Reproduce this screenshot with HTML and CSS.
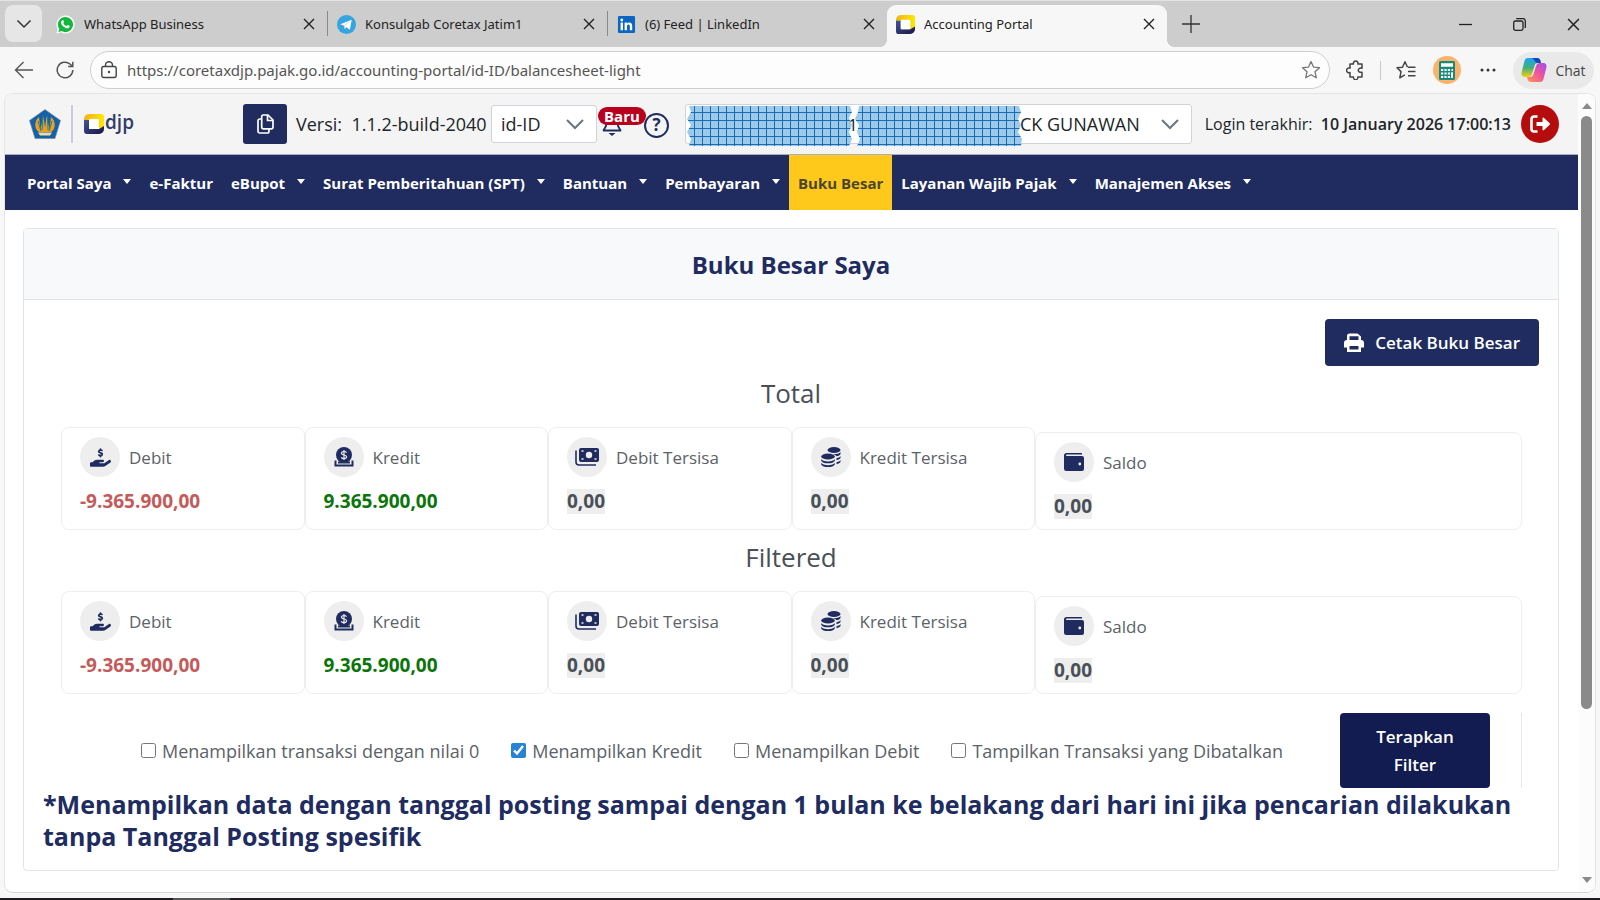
FILE: index.html
```html
<!DOCTYPE html>
<html lang="id">
<head>
<meta charset="utf-8">
<meta name="viewport" content="width=device-width, initial-scale=1">
<title>Accounting Portal</title>
<link rel="stylesheet" href="styles.css">
</head>
<body>
<svg class="defs" width="0" height="0" aria-hidden="true">
  <defs>
    <linearGradient id="gold" x1="0" y1="0" x2="1" y2="0"><stop offset="0" stop-color="#f2b21b"/><stop offset="1" stop-color="#ffe800"/></linearGradient>
    <linearGradient id="ink" x1="0" y1="0" x2="1" y2="1"><stop offset="0" stop-color="#3f5598"/><stop offset="1" stop-color="#1a1444"/></linearGradient>
    <linearGradient id="cop1" x1="0" y1="0" x2="0" y2="1"><stop offset="0" stop-color="#1ba5f5"/><stop offset=".5" stop-color="#3fae7c"/><stop offset="1" stop-color="#f2cf13"/></linearGradient>
    <linearGradient id="cop2" x1="1" y1="0" x2="0" y2="1"><stop offset="0" stop-color="#a04df0"/><stop offset=".5" stop-color="#f0559a"/><stop offset="1" stop-color="#ff9a4a"/></linearGradient>
    <pattern id="mesh" width="8" height="8" patternUnits="userSpaceOnUse"><rect width="8" height="8" fill="#9ccbe9"/><path d="M7.500 0V8M0 6.500H8" stroke="#1b6ab8" stroke-width="1"/></pattern>
    <symbol id="x" viewBox="0 0 12 12"><path d="M1 1l10 10M11 1L1 11" fill="none" stroke="currentColor" stroke-width="1.4"/></symbol>
    <symbol id="chev" viewBox="0 0 20 12"><path d="M2 2l8 8 8-8" fill="none" stroke="currentColor" stroke-width="2"/></symbol>
    <symbol id="djp" viewBox="0 0 20 20"><path d="M5 0h12a3 3 0 0 1 3 3v10l-5 2V6H6L0 9V5a5 5 0 0 1 5-5z" fill="url(#gold)"/><path d="M0 6h5v9h10l5-3v3a5 5 0 0 1-5 5H3a3 3 0 0 1-3-3z" fill="url(#ink)"/><rect x="5" y="5" width="10" height="10" rx="1" fill="#fff"/></symbol>
    <symbol id="hand" viewBox="0 0 576 512"><path d="M312 24V34.500c6.400 1.200 12.600 2.700 18.200 4.200 12.800 3.400 20.400 16.600 17 29.400s-16.600 20.400-29.400 17c-10.900-2.900-21.100-4.900-30.200-5-7.300-.1-14.700 1.700-19.400 4.400-2.100 1.300-3.100 2.400-3.500 3-.3 .5-.7 1.200-.7 2.800 0 .3 0 .5 0 .6 .2 .2 .9 1.200 3.300 2.600 5.800 3.500 14.400 6.200 27.400 10.100l.9 .3c11.100 3.300 25.900 7.800 37.900 15.300 13.700 8.600 26.100 22.900 26.400 44.900 .3 22.500-11.400 38.900-26.700 48.500-6.700 4.100-13.900 7-21.300 8.800V232c0 13.300-10.700 24-24 24s-24-10.700-24-24V220.600c-9.500-2.300-18.200-5.300-25.600-7.800-2.100-.7-4.100-1.400-6-2-12.600-4.200-19.400-17.800-15.200-30.400s17.800-19.400 30.400-15.200c2.600 .9 5 1.700 7.300 2.500 13.600 4.600 23.400 7.900 33.900 8.300 8 .3 15.100-1.600 19.200-4.100 1.900-1.200 2.800-2.200 3.200-2.900 .4-.6 .9-1.800 .8-4.100l0-.2c0-1 0-2.100-4-4.600-5.700-3.600-14.300-6.400-27.100-10.300l-1.900-.6c-10.800-3.200-25-7.500-36.400-14.400-13.500-8.100-26.500-22-26.600-44.100-.1-22.900 12.900-38.600 27.700-47.400 6.400-3.800 13.300-6.400 20.200-8.200V24c0-13.300 10.700-24 24-24s24 10.700 24 24zM568 336c13 18 10 43-8 56L433 485c-23 17-51 27-81 27H32c-18 0-32-14-32-32V416c0-18 14-32 32-32H69l45-36c23-18 51-28 80-28H352c18 0 32 14 32 32s-14 32-32 32H272c-9 0-16 7-16 16s7 16 16 16H392L512 328c18-13 43-10 56 8z"/></symbol>
    <symbol id="coin" viewBox="0 0 20 20"><circle cx="10" cy="8" r="8"/><path d="M1.500 13.500v5h17v-5M1 18.500h18" fill="none" stroke="currentColor" stroke-width="2"/><path d="M4 15.500h12" stroke="currentColor" stroke-width="2"/><path d="M12.600 5.600C12 4.800 11.200 4.500 10 4.500c-1.600 0-2.500.7-2.500 1.700 0 2.400 5.100 1.200 5.100 3.600 0 1.100-1 1.800-2.600 1.800-1.300 0-2.200-.4-2.800-1.300M10 3v10" fill="none" stroke="#eee" stroke-width="1.200"/></symbol>
    <symbol id="bill" viewBox="0 0 24 18"><rect x="4" y="0" width="20" height="14" rx="2"/><circle cx="14" cy="7" r="3.200" fill="#eee"/><path d="M6.500 3h2M6.500 11h2M19.500 3h2M19.500 11h2" stroke="#eee" stroke-width="1.600"/><path d="M1 2.500V14a3 3 0 0 0 3 3h17" fill="none" stroke="currentColor" stroke-width="1.600"/></symbol>
    <symbol id="coins" viewBox="0 0 20 20"><ellipse cx="13" cy="3" rx="6.500" ry="3"/><ellipse cx="7" cy="9.500" rx="6.800" ry="3"/><path d="M.2 12c1 3.200 12.600 3.200 13.600 0v1.700c-1 3.400-12.600 3.400-13.600 0zM.2 15.800c1 3.200 12.600 3.200 13.600 0v1.600c-1 3.400-12.600 3.400-13.600 0zM19.500 5v2c-.5 1.200-2 1.900-4 2.200-.7-1-2-1.700-3.500-2.200 4 .2 7-.6 7.500-2zM19.500 9v2c-.5 1-2 1.800-4 2.200v-2c2-.4 3.500-1 4-2.200zM19.500 13v2c-.5 1-2 1.800-4 2.200v-2c2-.4 3.500-1 4-2.200z"/></symbol>
    <symbol id="wallet" viewBox="0 0 20 18"><path d="M2.500 0H18v1.500H2.800a.8.8 0 0 0 0 1.600H18a2 2 0 0 1 2 2V16a2 2 0 0 1-2 2H2.500A2.500 2.500 0 0 1 0 15.500v-13A2.500 2.500 0 0 1 2.500 0zm13.300 9.600a1.400 1.400 0 1 0 0 2.800 1.400 1.400 0 0 0 0-2.800z"/></symbol>
  </defs>
</svg>

<div class="tabstrip">
  <button class="tab-menu" aria-label="Tab"><svg width="16" height="10" viewBox="0 0 16 10"><path d="M1.500 1.500L8 8l6.500-6.500" fill="none" stroke="#333" stroke-width="1.500"/></svg></button>
  <div class="tab">
    <svg width="19" height="19" viewBox="0 0 20 20"><path d="M10 .5a9.500 9.500 0 1 1-4.800 17.700L.5 19.500l1.300-4.700A9.500 9.500 0 0 1 10 .5z" fill="#fff"/><path d="M10 2a8 8 0 1 1-4.100 14.900L2.500 18l1-3.400A8 8 0 0 1 10 2z" fill="#12b83b"/><path d="M6.700 5.500c.7-.5 1.200 0 1.700 1.600.2.700-.8 1-.6 1.500.7 1.400 1.600 2.300 3.200 3 .6.100.9-1.200 1.500-1 1.300.6 2 .8 1.900 1.400-.5 2-2.500 2.200-4 1.600-2.500-.9-4.600-3-5.100-5.200-.2-1.200.4-2.300 1.400-2.900z" fill="#fff"/></svg>
    <span class="tab-title">WhatsApp Business</span>
    <button class="tab-close" aria-label="Tutup"><svg width="12" height="12"><use href="#x"/></svg></button>
  </div>
  <div class="tab">
    <svg width="19" height="19" viewBox="0 0 20 20"><circle cx="10" cy="10" r="10" fill="#34a5e0"/><path d="M3.500 9.800L15.500 5l-2 10.500-3.600-2.700-1.900 1.900-.4-3.500z" fill="#fff"/><path d="M7.800 11.200l5-4" stroke="#b8ddf2" stroke-width="1"/></svg>
    <span class="tab-title">Konsulgab Coretax Jatim1</span>
    <button class="tab-close" aria-label="Tutup"><svg width="12" height="12"><use href="#x"/></svg></button>
  </div>
  <div class="tab">
    <svg width="19" height="19" viewBox="0 0 20 20"><rect x="1" y="1" width="18" height="18" rx="1.500" fill="#0a66c2"/><path d="M3.800 8h2.500v8H3.800zM8 8h2.400v1.200c1.300-2.200 5.600-2 5.600 2V16h-2.500v-4.300c0-2.400-3-2.200-3 0V16H8z" fill="#fff"/><circle cx="5" cy="5.300" r="1.500" fill="#fff"/></svg>
    <span class="tab-title">(6) Feed | LinkedIn</span>
    <button class="tab-close" aria-label="Tutup"><svg width="12" height="12"><use href="#x"/></svg></button>
  </div>
  <div class="tab active">
    <svg width="19" height="19"><use href="#djp"/></svg>
    <span class="tab-title">Accounting Portal</span>
    <button class="tab-close" aria-label="Tutup"><svg width="12" height="12"><use href="#x"/></svg></button>
  </div>
  <button class="new-tab" aria-label="Tab baru"><svg width="18" height="18" viewBox="0 0 18 18"><path d="M9 0v18M0 9h18" stroke="#333" stroke-width="1.300"/></svg></button>
  <div class="window-buttons">
    <button aria-label="Kecilkan"><svg width="13" height="13" viewBox="0 0 13 13"><path d="M0 6.500h13" stroke="#222" stroke-width="1.300"/></svg></button>
    <button aria-label="Pulihkan"><svg width="13" height="13" viewBox="0 0 13 13"><rect x=".7" y="3" width="9.300" height="9.300" rx="1.800" fill="none" stroke="#222" stroke-width="1.300"/><path d="M3.200 .7H10A2.300 2.300 0 0 1 12.300 3v7" fill="none" stroke="#222" stroke-width="1.300"/></svg></button>
    <button aria-label="Tutup jendela"><svg width="13" height="13"><use href="#x"/></svg></button>
  </div>
</div>

<div class="toolbar">
  <button class="tool" aria-label="Kembali"><svg width="20" height="18" viewBox="0 0 20 18"><path d="M19 9H1.500M9.500 1l-8 8 8 8" fill="none" stroke="#555" stroke-width="1.400"/></svg></button>
  <button class="tool" aria-label="Muat ulang"><svg width="18" height="18" viewBox="0 0 18 18"><path d="M16.800 9A7.800 7.800 0 1 1 14 3l2.500 2.200M16.800 .8v4.700h-4.700" fill="none" stroke="#555" stroke-width="1.500"/></svg></button>
  <label class="address">
    <svg width="16" height="18" viewBox="0 0 16 18"><rect x=".8" y="5.500" width="14.400" height="11" rx="2" fill="none" stroke="#444" stroke-width="1.400"/><path d="M4.500 5.500V4.200a3.500 3.500 0 0 1 7 0v1.300" fill="none" stroke="#444" stroke-width="1.400"/><circle cx="8" cy="11" r="1.200" fill="#444"/></svg>
    <input type="text" aria-label="Alamat" value="https://coretaxdjp.pajak.go.id/accounting-portal/id-ID/balancesheet-light">
    <svg width="20" height="20" viewBox="0 0 20 20"><path d="M10 1.500l2.500 5.600 6 .6-4.500 4.100 1.300 6-5.300-3.100-5.300 3.100 1.300-6L1.500 7.700l6-.6z" fill="none" stroke="#777" stroke-width="1.300" stroke-linejoin="round"/></svg>
  </label>
  <button class="tool" aria-label="Ekstensi"><svg width="18" height="20" viewBox="0 0 18 20"><path d="M4 4h3.500a2.300 2.300 0 1 1 4.400 0H16v4.200c-5-1-5 5 0 4V17h-4.200a2.200 2.200 0 1 1-4.300 0H4v-4.500a2.400 2.400 0 1 1 0-4.300z" fill="none" stroke="#444" stroke-width="1.500" stroke-linejoin="round"/></svg></button>
  <span class="tool-divider"></span>
  <button class="tool" aria-label="Favorit"><svg width="20" height="20" viewBox="0 0 20 20"><path d="M11.500 7.200L9 1.800 6.500 7.200l-5.500.6 4 3.800-1.200 6.200 5-3" fill="none" stroke="#444" stroke-width="1.500" stroke-linejoin="round"/><path d="M12 7.200h7.500M12 11.500h7.500M12 15.800h7.500" stroke="#444" stroke-width="1.500"/></svg></button>
  <button class="tool" aria-label="Kalkulator"><svg width="28" height="28" viewBox="0 0 28 28"><circle cx="14" cy="14" r="14" fill="#fbb36b"/><rect x="6" y="5" width="16" height="19" rx="1.500" fill="#178a7c"/><path d="M8 9h12" stroke="#fff" stroke-width="3.500"/><path d="M8 14h9M8 17.500h9M8 21h9M18.500 14H20M18.500 17.500H20" stroke="#fff" stroke-width="2.200" stroke-dasharray="2.200 1.200"/><path d="M19 16.500V22" stroke="#fff" stroke-width="2"/></svg></button>
  <button class="tool" aria-label="Lainnya"><svg width="16" height="4" viewBox="0 0 16 4"><g fill="#333"><circle cx="2" cy="2" r="1.500"/><circle cx="8" cy="2" r="1.500"/><circle cx="14" cy="2" r="1.500"/></g></svg></button>
  <button class="chat"><svg width="26" height="24" viewBox="0 0 26 24"><path d="M7 0h9c2 0 3 1 3.500 3l.5 2h-3c-2 0-3 1-3.500 3L11 16c-.6 2-2 3-4 3H4c-3 0-4-2-3.300-5L3.500 3C4 1 5 0 7 0z" fill="url(#cop1)"/><path d="M11 0h5c2 0 3 1 3.500 3l.5 2h-3c-2 0-3-1-3.600-3z" fill="#1744b8"/><path d="M19 24h-9c-2 0-3-1-3.500-3L6 19h3c2 0 3-1 3.500-3L15 8c.6-2 2-3 4-3h3c3 0 4 2 3.300 5l-2.800 11c-.5 2-1.500 3-3.500 3z" fill="url(#cop2)"/></svg>Chat</button>
</div>

<div class="viewport">
  <div class="page">
    <header class="site-header">
      <a class="brand" href="#" aria-label="djp">
        <svg width="32" height="30" viewBox="0 0 32 30"><path d="M16 .5L31.500 11.500 26 29.500H6L.5 11.500z" fill="#1561a8" stroke="#7b8794" stroke-width=".6"/><path d="M10 8C5 12 5 20 10 23h12c5-3 5-11 0-15l-1.500 12-3-13-1.500 12-1.500-12-3 13z" fill="#e8a01e"/><path d="M14 7l-1 14M18.500 7l.5 14M9 12l3 10M23 12l-3 10" stroke="#1c7f9a" stroke-width="1"/><path d="M9 23.500h14l-2 3H11z" fill="#f4d9a0"/></svg>
        <span class="brand-line"></span>
        <svg width="20" height="20"><use href="#djp"/></svg><span class="brand-name">djp</span>
      </a>
      <button class="copy" aria-label="Salin versi"><svg width="17" height="20" viewBox="0 0 17 20"><path d="M5.500 1H11l5 5v7a1.800 1.800 0 0 1-1.800 1.800H6.500A1.800 1.800 0 0 1 4.700 13V2.500A1.500 1.500 0 0 1 6 1z" fill="none" stroke="#fff" stroke-width="1.700"/><path d="M10.500 1v5.500H16M4.500 5H2.700A1.700 1.700 0 0 0 1 6.700v10.600A1.700 1.700 0 0 0 2.700 19h7.600a1.700 1.700 0 0 0 1.700-1.700V15" fill="none" stroke="#fff" stroke-width="1.700"/></svg></button>
      <span class="version">Versi:&nbsp; 1.1.2-build-2040</span>
      <span class="select-wrap lang"><select aria-label="Bahasa"><option>id-ID</option></select><svg width="20" height="12"><use href="#chev"/></svg></span>
      <button class="bell" aria-label="Notifikasi"><svg width="20" height="24" viewBox="0 0 20 24"><path d="M10 2c-4 0-6 3-6 6v6l-2.500 4.500h17L16 14V8c0-3-2-6-6-6z" fill="none" stroke="#202c5f" stroke-width="1.800" stroke-linejoin="round"/><path d="M6.500 21h7L10 24z" fill="#202c5f"/></svg><span class="badge">Baru</span></button>
      <button class="help" aria-label="Bantuan">?</button>
      <div class="select-wrap user">
        <select aria-label="Pengguna"><option>CK GUNAWAN</option></select>
        <svg width="20" height="12"><use href="#chev"/></svg>
        <span class="user-num">1</span>
        <svg class="mask" width="336" height="40" viewBox="0 0 336 40"><path d="M2 0H163l2 6-3 6 3 7-3 7 3 7-3 7H2l2-7-4-7 4-7-4-6 4-7zM172 0H332l2 6-3 7 3 6-3 7 4 7-1 7H170l3-7-3-7 2-7-4-6 3-7z" fill="url(#mesh)"/></svg>
      </div>
      <span class="login">Login terakhir:&nbsp; <b>10 January 2026 17:00:13</b></span>
      <button class="logout" aria-label="Keluar"><svg width="20" height="18" viewBox="0 0 20 18"><path d="M7.500 1.500H4A2.500 2.500 0 0 0 1.500 4v10A2.500 2.500 0 0 0 4 16.500h3.500" fill="none" stroke="#fff" stroke-width="2.600"/><path d="M6.500 7h6V3.500c0-1 .8-1.200 1.500-.6l5.500 5.200c.5.500.5 1.300 0 1.800L14 15.100c-.7.600-1.500.4-1.500-.6V11h-6z" fill="#fff"/></svg></button>
    </header>

    <nav class="menu">
      <a class="has-sub" href="#">Portal Saya</a>
      <a href="#">e-Faktur</a>
      <a class="has-sub" href="#">eBupot</a>
      <a class="has-sub" href="#">Surat Pemberitahuan (SPT)</a>
      <a class="has-sub" href="#">Bantuan</a>
      <a class="has-sub" href="#">Pembayaran</a>
      <a class="current" href="#">Buku Besar</a>
      <a class="has-sub" href="#">Layanan Wajib Pajak</a>
      <a class="has-sub" href="#">Manajemen Akses</a>
    </nav>

    <main class="card">
      <h1 class="card-title">Buku Besar Saya</h1>
      <div class="card-body">
        <button class="print"><svg width="20" height="19" viewBox="0 0 20 19"><path d="M3 7.500V3a2.500 2.500 0 0 1 2.500-2.500h8L17 3.500v4h-2.500V3.200h-9v4.300z" fill="#fff"/><path d="M3 7h14a3 3 0 0 1 3 3v4.500h-3V19H3v-4.500H0V10a3 3 0 0 1 3-3zm2.500 6v3.500h9V13z" fill="#fff" fill-rule="evenodd"/></svg>Cetak Buku Besar</button>

        <h2 class="section-title">Total</h2>
        <div class="stats">
          <div class="stat"><div class="stat-head"><span class="disc"><svg width="21" height="19"><use href="#hand"/></svg></span>Debit</div><span class="value negative">-9.365.900,00</span></div>
          <div class="stat"><div class="stat-head"><span class="disc"><svg width="20" height="20"><use href="#coin"/></svg></span>Kredit</div><span class="value positive">9.365.900,00</span></div>
          <div class="stat"><div class="stat-head"><span class="disc"><svg width="24" height="18"><use href="#bill"/></svg></span>Debit Tersisa</div><span class="value zero">0,00</span></div>
          <div class="stat"><div class="stat-head"><span class="disc"><svg width="20" height="20"><use href="#coins"/></svg></span>Kredit Tersisa</div><span class="value zero">0,00</span></div>
          <div class="stat balance"><div class="stat-head"><span class="disc"><svg width="20" height="18"><use href="#wallet"/></svg></span>Saldo</div><span class="value zero">0,00</span></div>
        </div>

        <h2 class="section-title">Filtered</h2>
        <div class="stats">
          <div class="stat"><div class="stat-head"><span class="disc"><svg width="21" height="19"><use href="#hand"/></svg></span>Debit</div><span class="value negative">-9.365.900,00</span></div>
          <div class="stat"><div class="stat-head"><span class="disc"><svg width="20" height="20"><use href="#coin"/></svg></span>Kredit</div><span class="value positive">9.365.900,00</span></div>
          <div class="stat"><div class="stat-head"><span class="disc"><svg width="24" height="18"><use href="#bill"/></svg></span>Debit Tersisa</div><span class="value zero">0,00</span></div>
          <div class="stat"><div class="stat-head"><span class="disc"><svg width="20" height="20"><use href="#coins"/></svg></span>Kredit Tersisa</div><span class="value zero">0,00</span></div>
          <div class="stat balance"><div class="stat-head"><span class="disc"><svg width="20" height="18"><use href="#wallet"/></svg></span>Saldo</div><span class="value zero">0,00</span></div>
        </div>

        <form class="filters">
          <label><input type="checkbox">Menampilkan transaksi dengan nilai 0</label>
          <label><input type="checkbox" checked>Menampilkan Kredit</label>
          <label><input type="checkbox">Menampilkan Debit</label>
          <label><input type="checkbox">Tampilkan Transaksi yang Dibatalkan</label>
          <button class="apply" type="button">Terapkan Filter</button>
        </form>

        <p class="note">*Menampilkan data dengan tanggal posting sampai dengan 1 bulan ke belakang dari hari ini jika pencarian dilakukan tanpa Tanggal Posting spesifik</p>
      </div>
    </main>
  </div>
  <div class="scrollbar" aria-hidden="true"><span class="arrow up"></span><span class="thumb"></span><span class="arrow down"></span></div>
</div>
<div class="taskbar-edge"></div>
</body>
</html>
```

FILE: styles.css
```css
* { box-sizing: border-box; }

body {
  margin: 0;
  height: 100vh;
  display: flex;
  flex-direction: column;
  overflow: hidden;
  background: #f7f7f7;
  color: #495057;
  font-family: "Open Sans", "Noto Sans", sans-serif;
  font-size: 17px;
}

button, input, select { font: inherit; color: inherit; }
button { border: 0; background: none; padding: 0; display: flex; align-items: center; justify-content: center; }
a { color: inherit; text-decoration: none; }
svg { flex: none; display: block; }
.defs { position: absolute; }

/* Browser tabs */
.tabstrip {
  display: flex;
  align-items: flex-end;
  height: 47px;
  padding-left: 5px;
  background: #cdcdcd;
  border-top: 1px solid #e3e3e3;
  color: #222;
  flex: none;
}
.tab-menu { width: 37px; height: 37px; margin: 0 5px 5px 0; border-radius: 8px; background: #e6e6e6; }
.tab {
  position: relative;
  display: flex;
  align-items: center;
  flex: 0 1 280px;
  min-width: 0;
  height: 42px;
  padding: 0 12px 4px 9px;
  font-family: "Noto Sans", sans-serif;
  font-size: 13px;
}
.tab + .tab:not(.active) { border-left: 1px solid transparent; border-image: linear-gradient(transparent 17%, #8a8a8a 17%, #8a8a8a 72%, transparent 72%) 1; }
.tab.active { background: #f7f7f7; border-radius: 9px 9px 0 0; }
.tab.active::before, .tab.active::after {
  content: "";
  position: absolute;
  bottom: 0;
  width: 8px;
  height: 8px;
}
.tab.active::before { left: -8px; background: radial-gradient(circle at 0 0, transparent 8px, #f7f7f7 8px); }
.tab.active::after { right: -8px; background: radial-gradient(circle at 100% 0, transparent 8px, #f7f7f7 8px); }
.tab-title { flex: 1; margin-left: 9px; white-space: nowrap; overflow: hidden; }
.tab-close { width: 12px; height: 20px; }
.new-tab { width: 48px; height: 46px; }
.window-buttons { display: flex; margin-left: auto; }
.window-buttons button { width: 54px; height: 46px; }

/* Address bar row */
.toolbar {
  display: flex;
  align-items: center;
  gap: 9px;
  height: 46px;
  padding: 0 6px 0 8px;
  flex: none;
}
.tool { width: 32px; height: 32px; flex: none; }
.tool-divider { width: 1px; height: 19px; background: #c9c9c9; }
.address {
  display: flex;
  align-items: center;
  gap: 10px;
  flex: 1;
  height: 38px;
  padding: 0 8px 0 10px;
  border: 1px solid #cfcfcf;
  border-radius: 19px;
  background: #fdfdfd;
}
.address input { flex: 1; min-width: 0; border: 0; padding: 0; background: none; outline: 0; font-family: "Noto Sans", sans-serif; font-size: 15px; color: #555; }
.chat { gap: 8px; width: 81px; height: 37px; border-radius: 19px; background: #e9e9e9; font-size: 14px; color: #444; }

/* Page frame */
.viewport {
  display: flex;
  flex: 1;
  min-height: 0;
  margin: 0 4px 5px;
  border: 1px solid #e4e4e4;
  border-bottom-color: #d6d6d6;
  border-radius: 9px;
  background: #fff;
  overflow: hidden;
}
.page { flex: 1; min-width: 0; }
.scrollbar { display: flex; flex-direction: column; align-items: center; width: 17px; padding: 9px 0 9px; background: #fcfcfc; }
.arrow { border: 5px solid transparent; }
.arrow.up { border-top: 0; border-bottom: 6px solid #8a8a8a; margin-bottom: 7px; }
.arrow.down { border-bottom: 0; border-top: 6px solid #8a8a8a; margin-top: auto; }
.thumb { width: 11px; height: 76%; border-radius: 6px; background: #8a8a8a; }
.taskbar-edge { height: 2px; flex: none; background: linear-gradient(90deg, #1f1a1e 173px, #555 173px, #555 230px, #1f1a1e 230px); }

/* Site header */
.site-header {
  display: flex;
  align-items: center;
  height: 60px;
  padding: 0 19px 0 24px;
  background: #f4f4f4;
  color: #212529;
  white-space: nowrap;
}
.brand { display: flex; align-items: center; width: 214px; }
.brand-line { width: 2px; height: 38px; margin: 0 11px 0 10px; background: #c9cdda; }
.brand-name { margin: 0 0 4px 1px; font-size: 19px; line-height: 28px; font-weight: 600; color: #313c68; }
.copy { width: 44px; height: 40px; border-radius: 3px; background: #202c5f; }
.version { width: 204px; padding-left: 9px; font-size: 18px; }
.select-wrap { position: relative; display: flex; align-items: center; font-size: 18px; }
.select-wrap select {
  appearance: none;
  width: 100%;
  padding: 0 40px 0 9px;
  border: 1px solid #ced4da;
  border-radius: 3px;
  background: #fff;
}
.select-wrap > svg:not(.mask) { position: absolute; right: 12px; color: #6c757d; }
.lang { width: 106px; }
.lang select { height: 38px; }
.bell { position: relative; width: 30px; height: 34px; }
.badge {
  position: absolute;
  top: 0;
  left: 1px;
  padding: 0 6px;
  border-radius: 9px;
  background: #b8001f;
  color: #fff;
  font-size: 15px;
  line-height: 18px;
  font-weight: 700;
}
.help { width: 25px; height: 25px; margin: 2px 16px 0 17px; border: 2px solid #202c5f; border-radius: 50%; color: #202c5f; font-size: 17px; line-height: 20px; font-weight: 700; }
.user { flex: 1; }
.user select { height: 40px; padding-left: 334px; }
.user-num { position: absolute; left: 163px; font-size: 17px; }
.mask { position: absolute; left: 2px; top: 2px; }
.login { margin: 0 10px 0 13px; font-size: 16px; }
.login b { font-weight: 600; }
.logout { width: 38px; height: 38px; border-radius: 50%; background: #b50d0d; }

/* Main menu */
.menu {
  display: flex;
  height: 56px;
  padding-left: 13px;
  border-top: 1px solid #aab0c4;
  background: #202c5f;
  color: #fff;
  font-size: 15px;
  font-weight: 700;
  white-space: nowrap;
}
.menu a { display: flex; align-items: center; padding: 0 9px; }
.has-sub::after { content: ""; margin: -2px 0 0 12px; border: 4px solid transparent; border-top: 5px solid currentColor; border-bottom: 0; }
.menu .current { background: #ffc91b; color: #4a4632; }

/* Ledger card */
.card { margin: 18px 19px 0 18px; border: 1px solid #e1e5ea; border-radius: 4px; }
.card-title {
  margin: 0;
  padding: 19px 18px 17px;
  background: #f8f9fb;
  border-bottom: 1px solid #dee2e6;
  color: #202c5f;
  font-size: 24px;
  line-height: 34px;
  font-weight: 700;
  text-align: center;
}
.card-body { padding: 19px 19px 18px; }
.print {
  gap: 11px;
  height: 47px;
  margin-left: auto;
  padding: 0 19px;
  border-radius: 4px;
  background: #202c5f;
  color: #fff;
  font-weight: 600;
}
.section-title { margin: 0; padding: 7px 0 14px; font-size: 26px; line-height: 40px; font-weight: 400; text-align: center; }
.stats { display: grid; grid-template-columns: 1fr 1fr 1fr 1fr 2fr; margin: 0 17px 0 18px; }
.stat { padding: 9px 18px 15px; border: 1px solid #eee; border-radius: 8px; }
.balance { margin-top: 5px; padding-bottom: 10px; }
.stat-head { display: flex; align-items: center; gap: 9px; margin-bottom: 12px; color: #5c6268; }
.disc { display: flex; align-items: center; justify-content: center; width: 40px; height: 40px; border-radius: 50%; background: #eee; fill: #202c5f; color: #202c5f; }
.value { display: inline-block; font-size: 19px; font-weight: 700; line-height: 25px; }
.negative { color: #c45a5a; }
.positive { color: #0b750b; }
.zero { background: #eee; }

.filters {
  display: flex;
  align-items: center;
  gap: 32px;
  margin: 19px 17px 0 18px;
  padding: 0 31px 0 80px;
  border-right: 1px solid #e6e8ea;
  color: #5c6268;
  font-size: 18px;
}
.filters label { display: flex; align-items: center; gap: 6px; white-space: nowrap; }
.filters input { width: 15px; height: 15px; margin: 0; accent-color: #2684d4; }
.apply { width: 150px; height: 75px; flex: none; margin-left: auto; padding: 0 24px; border-radius: 4px; background: #131c50; color: #fff; font-size: 17px; font-weight: 600; line-height: 28px; text-align: center; }
.note { margin: 0; color: #202c5f; font-size: 25px; line-height: 32px; font-weight: 700; }
```
